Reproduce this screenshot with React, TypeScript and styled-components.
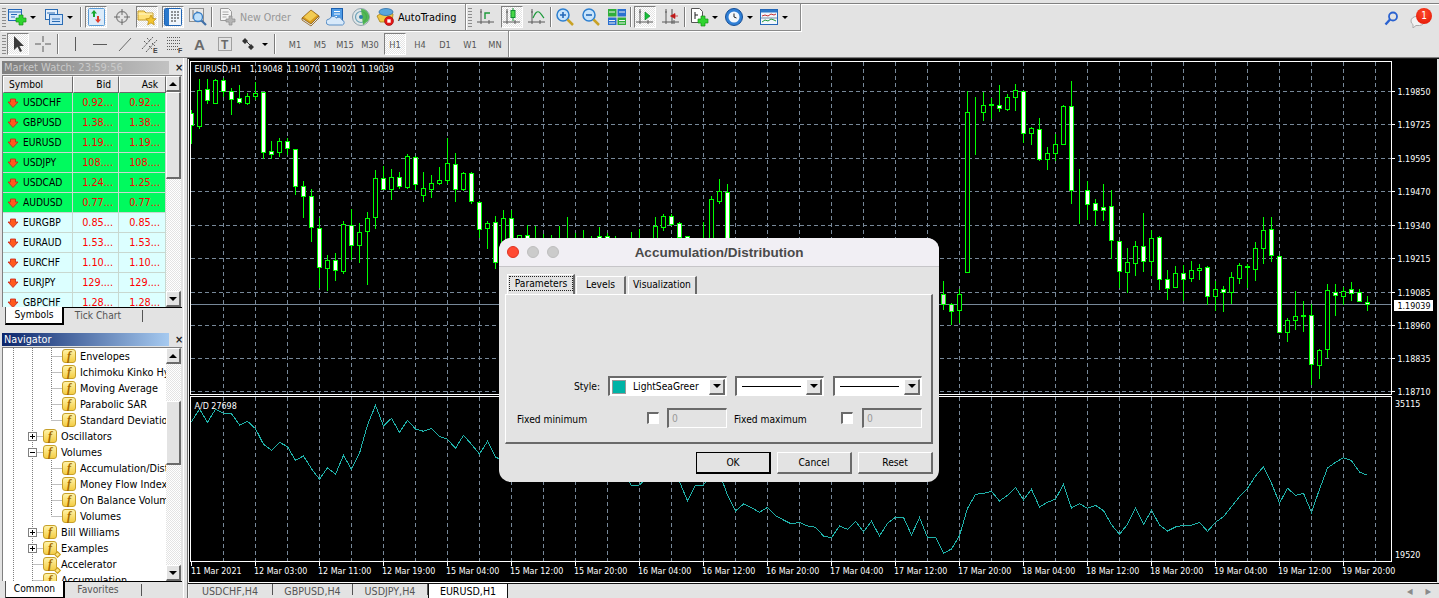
import React from "react";
import styled, { createGlobalStyle, css } from "styled-components";

const GlobalStyle = createGlobalStyle`
    html, body {
        margin: 0;
        padding: 0;
        overflow: hidden;
        background: #e3e3e3;
    }
    * {
        box-sizing: border-box;
    }
`;

const UI_FONT = `"DejaVu Sans Condensed", "DejaVu Sans", "Liberation Sans", sans-serif`;
const dither = css`
    background: repeating-conic-gradient(#ffffff 0 25%, #e3e3e3 0 50%) 0 0 / 2px 2px;
`;
const raised = css`
    background: #e3e3e3;
    border-style: solid;
    border-width: 1px 2px 2px 1px;
    border-color: #ffffff #6a6a6a #6a6a6a #ffffff;
`;
const sunken = css`
    border-style: solid;
    border-width: 2px 1px 1px 2px;
    border-color: #6a6a6a #ffffff #ffffff #6a6a6a;
`;

const Page = styled.div`
    position: relative;
    width: 1439px;
    height: 598px;
    overflow: hidden;
    background: #e3e3e3;
    font-family: ${UI_FONT};
    font-size: 11px;
    color: #000;
`;

/* ---------- toolbars ---------- */

const TopStrip = styled.div`
    height: 3px;
`;
const RowOne = styled.div`
    display: flex;
    align-items: stretch;
    height: 28px;
    border-top: 1px solid #808080;
    box-shadow: inset 0 1px 0 #ffffff;
`;
const RowTwo = styled.div`
    display: flex;
    align-items: stretch;
    height: 27px;
    border-bottom: 1px solid #808080;
`;
const ToolBar = styled.div<{ $width: number }>`
    display: flex;
    align-items: center;
    width: ${(p) => p.$width}px;
    padding-left: 2px;
    border-right: 1px solid #8a8a8a;
    border-bottom: 1px solid #8a8a8a;
    box-shadow: 1px 1px 0 #ffffff;
`;
const PeriodBar = styled(ToolBar)`
    border-bottom: none;
    box-shadow: 1px 0 0 #ffffff;
`;
const Grip = styled.span`
    width: 4px;
    height: 19px;
    flex: none;
    background: repeating-linear-gradient(#8c8c8c 0 1px, transparent 1px 3px);
`;
const Sep = styled.span<{ $before: number; $after: number }>`
    width: 1px;
    height: 20px;
    flex: none;
    margin: 0 ${(p) => p.$after}px 0 ${(p) => p.$before}px;
    background: #7c7c7c;
    box-shadow: 1px 0 0 #ffffff;
`;
const ToolGroup = styled.div<{ $gap: number; $before?: number }>`
    display: flex;
    align-items: center;
    gap: ${(p) => p.$gap}px;
    margin-left: ${(p) => p.$before ?? 0}px;
`;
const ToolButton = styled.span<{ $active?: boolean }>`
    display: flex;
    align-items: center;
    justify-content: center;
    width: 22px;
    height: 22px;
    flex: none;
    ${(p) =>
        p.$active &&
        css`
            ${dither};
            border: 1px solid;
            border-color: #7f7f7f #ffffff #ffffff #7f7f7f;
        `}
`;
const PlainTool = styled.span`
    display: flex;
    align-items: center;
    gap: 3px;
    height: 22px;
    flex: none;
`;
const ToolLabel = styled.span<{ $off?: boolean }>`
    font-size: ${(p) => (p.$off ? "10.6px" : "10.9px")};
    white-space: nowrap;
    color: ${(p) => (p.$off ? "#969696" : "#000")};
`;
const Caret = styled.span`
    width: 0;
    height: 0;
    border-left: 3px solid transparent;
    border-right: 3px solid transparent;
    border-top: 3px solid #000;
`;
const PeriodButton = styled(ToolButton)`
    font-size: 9.2px;
    color: #555;
`;
const RightTools = styled.div`
    display: flex;
    align-items: center;
    gap: 8px;
    margin-left: auto;
    padding-right: 7px;
`;
const Bubble = styled.span`
    position: relative;
    width: 24px;
    height: 20px;
`;
const Badge = styled.span`
    position: absolute;
    top: 0;
    right: 0;
    width: 16px;
    height: 16px;
    border-radius: 50%;
    background: radial-gradient(circle at 50% 35%, #ff4a2a, #e01000);
    color: #fff;
    font-size: 10px;
    line-height: 16px;
    text-align: center;
`;

/* ---------- icons ---------- */

const IconSvg = styled.svg`
    display: block;
    flex: none;
    width: 20px;
    height: 20px;
`;

const GreenPlus = ({ x, y }: { x: number; y: number }) => (
    <path
        transform={`translate(${x} ${y})`}
        d="M3 0h4v3h3v4H7v3H3V7H0V3h3z"
        fill="#2fd42f"
        stroke="#148f14"
        strokeWidth=".7"
    />
);

const Axes = ({ color = "#5a5a5a" }: { color?: string }) => (
    <path d="M5 2v15M1 15h17M4 5h2M13 13v4" stroke={color} strokeWidth="1" fill="none" />
);

const iconSet: Record<string, React.ReactNode> = {
    newChart: (
        <>
            <rect x="1.5" y="2.5" width="13" height="11" fill="#dcebfb" stroke="#2468b8" />
            <path d="M1.5 5h13M4 7.5h6M4 10h4" stroke="#2468b8" />
            <GreenPlus x={9} y={8} />
        </>
    ),
    profiles: (
        <>
            <rect x="1.5" y="2.5" width="12" height="10" fill="#e6f0fb" stroke="#2a6cb4" />
            <rect x="5.5" y="7.5" width="13" height="10" fill="#cfe2f8" stroke="#2a6cb4" />
            <path d="M3 6h8M8 12h8M8 14.5h8" stroke="#2a6cb4" />
        </>
    ),
    watch: (
        <>
            <rect x="2.5" y="1.5" width="16" height="17" rx="1" fill="#dcecfa" stroke="#5a9bd6" />
            <path d="M8 3l3 3.5H9V10H7V6.5H5z" fill="#19a832" />
            <path d="M11 9h2v3.5h2L12 16l-3-3.5h2z" fill="#e03a2a" />
        </>
    ),
    data: (
        <>
            <circle cx="10" cy="10" r="5.5" fill="none" stroke="#8a8a8a" strokeWidth="1.3" />
            <path d="M10 2v6M10 12v6M2 10h6M12 10h6" stroke="#6a6a6a" />
        </>
    ),
    navigator: (
        <>
            <path d="M1 4h6l2 2h7v7H1z" fill="#ffe27a" stroke="#c39a28" />
            <path d="M1.5 7h14" stroke="#fff6c8" />
            <path d="M14 8l1.6 3.4 3.6.4-2.7 2.4.8 3.6-3.3-1.9-3.3 1.9.8-3.6-2.7-2.4 3.6-.4z" fill="#f3c52e" stroke="#b98a10" strokeWidth=".7" />
        </>
    ),
    terminal: (
        <>
            <rect x="1.5" y="1.5" width="17" height="17" rx="1" fill="#eef5fc" stroke="#1f63b3" />
            <rect x="2" y="2" width="4" height="16" fill="#2a78cc" />
            <path d="M8 5h8M8 8h8M8 11h8M8 14h6" stroke="#2c2c2c" strokeDasharray="2 1" />
        </>
    ),
    tester: (
        <>
            <rect x="1.5" y="1.5" width="14" height="13" fill="#e8e8e8" stroke="#8f8f8f" />
            <path d="M5 3v9M9 4v9" stroke="#777" />
            <circle cx="10" cy="10" r="4.5" fill="#bfe0fb" stroke="#3a7fc6" strokeWidth="1.3" />
            <path d="M13.5 13.5l4.5 4.5" stroke="#3f6fa8" strokeWidth="2.2" />
        </>
    ),
    newOrder: (
        <>
            <path d="M3.5 1.5h8l3 3v9h-11z" fill="#f4f4f4" stroke="#9a9a9a" />
            <path d="M5.5 5h6M5.5 7.5h6M5.5 10h4" stroke="#a8a8a8" />
            <path d="M12 9h3v3h3v3h-3v3h-3v-3H9v-3h3z" fill="#b5b5b5" stroke="#8c8c8c" strokeWidth=".7" />
        </>
    ),
    editor: (
        <>
            <path d="M1 11l9-8 8 6-8 8z" fill="#d69a1e" stroke="#8a5c10" strokeWidth=".8" />
            <path d="M3 10l7-6.5 6 4.8-7 6z" fill="#f2cb52" />
            <path d="M1 11v2l9 6 8-8V9" fill="none" stroke="#8a5c10" strokeWidth=".8" />
        </>
    ),
    cloud: (
        <>
            <rect x="5.5" y="1.5" width="11" height="12" fill="#4e9be6" stroke="#1c5fae" />
            <path d="M8 4.5h6M8 7h6M8 9.5h3" stroke="#ffffff" />
            <path d="M3 18a3 3 0 0 1 .5-6 4 4 0 0 1 7-1 3.5 3.5 0 0 1 5.5 2 2.6 2.6 0 0 1 .5 5z" fill="#d7e9fa" stroke="#5a8fc6" />
        </>
    ),
    signals: (
        <>
            <circle cx="10" cy="10" r="8.5" fill="#dfe6e8" stroke="#8fa3ad" />
            <circle cx="10" cy="10" r="5.5" fill="none" stroke="#6ba1b8" strokeWidth="1.2" />
            <path d="M10 2a8 8 0 0 1 7 12l-5 4z" fill="#3cae3c" opacity=".85" />
            <circle cx="10" cy="10" r="2" fill="#2a7fa8" />
        </>
    ),
    autoTrading: (
        <>
            <path d="M2 9l9-6 7 4-1 8H5z" fill="#f0c845" stroke="#a67f14" strokeWidth=".8" />
            <ellipse cx="11" cy="5" rx="7" ry="3.5" fill="#58a6dc" stroke="#2f6fa8" strokeWidth=".8" />
            <circle cx="14" cy="14" r="4.5" fill="#e41616" stroke="#8c0a0a" strokeWidth=".6" />
            <rect x="12.3" y="12.3" width="3.4" height="3.4" fill="#ffffff" />
        </>
    ),
    bars: (
        <>
            <Axes />
            <path d="M9 12V6h5" fill="none" stroke="#1c9a3a" strokeWidth="1.4" />
        </>
    ),
    candles: (
        <>
            <Axes />
            <path d="M11 1v13" stroke="#109030" />
            <rect x="9" y="3.5" width="4" height="7" fill="#46d846" stroke="#109030" />
        </>
    ),
    line: (
        <>
            <Axes />
            <path d="M6 11c2-5 4-7 6-6s3 4 5 6" fill="none" stroke="#1c9a3a" strokeWidth="1.2" />
        </>
    ),
    zoomIn: (
        <>
            <circle cx="8" cy="8" r="6" fill="#c8e4fb" stroke="#2c7fd0" strokeWidth="1.5" />
            <path d="M5 8h6M8 5v6" stroke="#2468b8" strokeWidth="1.6" />
            <path d="M12.5 12.5l5.5 5.5" stroke="#c9a226" strokeWidth="2.5" />
        </>
    ),
    zoomOut: (
        <>
            <circle cx="8" cy="8" r="6" fill="#c8e4fb" stroke="#2c7fd0" strokeWidth="1.5" />
            <path d="M5 8h6" stroke="#2468b8" strokeWidth="1.6" />
            <path d="M12.5 12.5l5.5 5.5" stroke="#c9a226" strokeWidth="2.5" />
        </>
    ),
    tile: (
        <>
            <rect x="1" y="2" width="8.5" height="7.5" fill="#2fae3a" />
            <rect x="10.5" y="2" width="8.5" height="7.5" fill="#2a6fd0" />
            <rect x="1" y="10.5" width="8.5" height="7.5" fill="#2a6fd0" />
            <rect x="10.5" y="10.5" width="8.5" height="7.5" fill="#2fae3a" />
            <path d="M2 5h6M12 5h6M2 13.5h6M12 13.5h6M2 16h6M12 16h6" stroke="#f2f2f2" />
        </>
    ),
    autoScroll: (
        <>
            <Axes />
            <path d="M10 5l5 4-5 4z" fill="#16c13a" stroke="#0a8a24" strokeWidth=".7" />
        </>
    ),
    shift: (
        <>
            <Axes />
            <path d="M11 2v15" stroke="#4d4d4d" />
            <path d="M17 9h-3V6.5L9.5 9l4.5 2.5V9" fill="#c01818" stroke="#c01818" strokeWidth=".7" />
        </>
    ),
    indicators: (
        <>
            <path d="M2.5 1.5h8l3 3v11h-11z" fill="#ffffff" stroke="#555" />
            <path d="M6 5v7M6 8h3" stroke="#222" />
            <GreenPlus x={9} y={9} />
        </>
    ),
    clock: (
        <>
            <circle cx="10" cy="10" r="8.5" fill="#2f7fd6" stroke="#174f96" />
            <circle cx="10" cy="10" r="5.5" fill="#f4f8fc" />
            <path d="M10 6.5V10l2.5 1" fill="none" stroke="#222" />
        </>
    ),
    template: (
        <>
            <rect x="1.5" y="2.5" width="17" height="15" fill="#f2f7fc" stroke="#2468b8" />
            <rect x="2" y="3" width="16" height="2.5" fill="#2c78c8" />
            <path d="M3 9l3-1 3 1 3-2 3 1 2-1" fill="none" stroke="#c43030" />
            <path d="M2 11h16" stroke="#7a8fa5" />
            <path d="M3 15l3-2 3 1 3-2 3 1 2 1" fill="none" stroke="#1e9a3a" />
        </>
    ),
    cursor: <path d="M6 2v14l3.5-3.2 2.5 5.2 2-1-2.5-5h4.5z" fill="#3a3a3a" />,
    cross: <path d="M10 2v6M10 12v6M2 10h6M12 10h6" stroke="#5a5a5a" />,
    vLine: <path d="M10.5 3v14" stroke="#5a5a5a" />,
    hLine: <path d="M3 10.5h14" stroke="#5a5a5a" />,
    trend: <path d="M4 17L16 4" stroke="#6a6a6a" />,
    channel: (
        <>
            <path d="M2 15L13 3M6 18L17 6M4 7l3 3M7 4l3 3M9 12l3 3M12 9l3 3" stroke="#5a5a5a" strokeDasharray="2 1" />
            <text x="13" y="19" fontSize="7" fontWeight="700" fontFamily="Liberation Sans" fill="#444">E</text>
        </>
    ),
    fibo: (
        <>
            <path d="M2 3.5h14M2 6.5h14M2 9.5h14M2 12.5h11M2 15.5h11" stroke="#5a5a5a" strokeDasharray="1 1" />
            <text x="13" y="19" fontSize="7" fontWeight="700" fontFamily="Liberation Sans" fill="#444">F</text>
        </>
    ),
    textA: <text x="4" y="16" fontSize="15" fontWeight="700" fontFamily="Liberation Sans" fill="#6a6a6a">A</text>,
    textT: (
        <>
            <rect x="3.5" y="3.5" width="13" height="13" fill="none" stroke="#5a5a5a" strokeDasharray="1 1" />
            <text x="6" y="15" fontSize="12" fontWeight="700" fontFamily="Liberation Sans" fill="#6a6a6a">T</text>
        </>
    ),
    arrows: (
        <>
            <path d="M3 7l3-3 3 3-3 3zM12 10l3 3-3 3-3-3z" fill="#333" />
            <path d="M8 8l3 3" stroke="#333" />
        </>
    ),
    search: (
        <>
            <circle cx="13" cy="8.5" r="4" fill="none" stroke="#2a62d0" strokeWidth="1.8" />
            <path d="M10 11.5L5.5 16.5" stroke="#2a62d0" strokeWidth="2.4" />
        </>
    ),
    chat: (
        <path d="M3 13a5.5 4.5 0 0 1 5.5-4.5h2a5.5 4.5 0 0 1 1 9H8l-3 2.5v-3.5a4 4 0 0 1-2-3.5z" fill="#f2f2f2" stroke="#aaaaaa" />
    ),
};

const Icon = ({ name }: { name: string }) => <IconSvg viewBox="0 0 20 20">{iconSet[name]}</IconSvg>;

/* ---------- left panels ---------- */

const Main = styled.div`
    display: flex;
    height: 540px;
`;
const LeftPane = styled.div`
    display: flex;
    flex-direction: column;
    width: 187px;
    flex: none;
    box-shadow: inset -3px 0 0 #e3e3e3, inset -4px 0 0 #ffffff;
`;
const MarketPanel = styled.section`
    display: flex;
    flex-direction: column;
    height: 271px;
    padding: 2px 0 0 2px;
`;
const NavigatorPanel = styled.section`
    display: flex;
    flex-direction: column;
    flex: 1;
    min-height: 0;
    padding: 3px 0 0 2px;
`;
const PanelHead = styled.div`
    display: flex;
    align-items: center;
    height: 14px;
    flex: none;
`;
const PanelTitle = styled.div<{ $active?: boolean }>`
    width: 167px;
    height: 13px;
    padding-left: 2px;
    line-height: 13px;
    font-size: ${(p) => (p.$active ? "10.8px" : "11px")};
    color: ${(p) => (p.$active ? "#ffffff" : "#c9c9c9")};
    background: ${(p) =>
        p.$active ? "linear-gradient(90deg, #0a246a, #a6caf0)" : "linear-gradient(90deg, #7f7f7f, #c2c2c2)"};
`;
const CloseMark = styled.span`
    margin-left: 6px;
    font-size: 11px;
    font-weight: 700;
    color: #222;
    line-height: 13px;
`;
const ListFrame = styled.div<{ $height: number }>`
    position: relative;
    display: flex;
    width: 180px;
    height: ${(p) => p.$height}px;
    flex: none;
    margin-top: 1px;
    overflow: hidden;
    border-top: 1px solid #808080;
    border-left: 1px solid #808080;
`;
const ListBody = styled.div`
    width: 163px;
    flex: none;
    overflow: hidden;
    background: #fff;
`;
const HeaderRow = styled.div`
    display: grid;
    grid-template-columns: 70px 46px 47px;
    height: 17px;
`;
const HeaderCell = styled.div<{ $right?: boolean }>`
    ${raised};
    border-width: 1px;
    padding: 0 7px 0 5px;
    line-height: 15px;
    font-size: 10.2px;
    text-align: ${(p) => (p.$right ? "right" : "left")};
`;
const QuoteRow = styled.div<{ $fresh: boolean }>`
    display: grid;
    grid-template-columns: 70px 46px 47px;
    height: 20px;
    background: ${(p) => (p.$fresh ? "#00fa5e" : "#dcffff")};
`;
const QuoteCell = styled.div`
    display: flex;
    align-items: center;
    border-right: 1px solid #c8d8d0;
    border-bottom: 1px solid #c8d8d0;
`;
const SymbolCell = styled(QuoteCell)`
    gap: 4px;
    padding-left: 4px;
    font-size: 10.2px;
`;
const PriceCell = styled(QuoteCell)`
    justify-content: flex-end;
    padding-right: 5px;
    font-size: 10.8px;
    color: #ff0000;
`;
const DownArrow = styled.svg`
    width: 12px;
    height: 12px;
    flex: none;
`;
const ScrollTrack = styled.div`
    ${dither};
    display: flex;
    flex-direction: column;
    width: 15px;
    flex: none;
`;
const ScrollThumb = styled.div<{ $before: number; $height: number }>`
    ${raised};
    width: 15px;
    height: ${(p) => p.$height}px;
    margin-top: ${(p) => p.$before}px;
    flex: none;
`;
const ScrollButton = styled.div<{ $bottom?: boolean }>`
    ${raised};
    display: flex;
    align-items: center;
    justify-content: center;
    width: 15px;
    height: 16px;
    flex: none;
    margin-top: ${(p) => (p.$bottom ? "auto" : "0")};
    &::after {
        content: "";
        border-left: 4px solid transparent;
        border-right: 4px solid transparent;
        ${(p) => (p.$bottom ? "border-top: 4px solid #000;" : "border-bottom: 4px solid #000;")}
    }
`;
const PanelTabs = styled.div`
    display: flex;
    align-items: stretch;
    height: 18px;
    margin-left: 3px;
    width: 177px;
    border-top: 1px solid #000;
`;
const PanelTab = styled.div<{ $active?: boolean; $width: number }>`
    width: ${(p) => p.$width}px;
    text-align: center;
    line-height: 16px;
    font-size: 10.2px;
    color: ${(p) => (p.$active ? "#000" : "#555")};
    ${(p) =>
        p.$active &&
        css`
            background: #fff;
            border-left: 1px solid #555;
            border-right: 2px solid #000;
            border-bottom: 2px solid #000;
            margin-top: -1px;
        `}
`;
const TabBar = styled.span`
    width: 1px;
    height: 12px;
    margin: 2px 0 0 10px;
    background: #555;
`;

const TreeRowWrap = styled.div`
    display: flex;
    align-items: center;
    height: 16px;
    white-space: nowrap;
    font-size: 10.8px;
`;
const TreeLines = styled.svg`
    display: block;
    flex: none;
    height: 16px;
`;
const FuncIcon = styled.span`
    position: relative;
    display: inline-block;
    width: 14px;
    height: 14px;
    flex: none;
    margin-right: 4px;
    border: 1px solid #c6a02a;
    border-radius: 3px;
    background: linear-gradient(#fff3a8, #f4cd45);
    font: italic 700 12px/12px "Liberation Serif", serif;
    color: #a56a00;
    text-align: center;
`;
const Diamond = styled.span`
    position: absolute;
    right: -4px;
    bottom: -3px;
    width: 5px;
    height: 5px;
    transform: rotate(45deg);
    background: #ffe680;
    border: 1px solid #c69a1a;
`;

/* ---------- chart ---------- */

const ChartPane = styled.main`
    display: flex;
    flex-direction: column;
    flex: 1;
    min-width: 0;
    padding-right: 3px;
    border-top: 1px solid #1a1a1a;
    border-left: 1px solid #6f6f6f;
    box-shadow: inset 1px 0 0 #f2f2f2;
`;
const ChartSvg = styled.svg`
    display: block;
    flex: none;
    width: 1248px;
    height: 523px;
    margin-left: 1px;
    background: #000;
    font-family: ${UI_FONT};
    font-size: 8.9px;
`;
const ChartEdge = styled.div`
    height: 1px;
    margin-left: 1px;
    background: #fff;
`;
const WindowTabs = styled.div`
    display: flex;
    align-items: stretch;
    height: 15px;
    margin-right: -3px;
    border-top: 1px solid #111;
    font-size: 10.6px;
`;
const WindowTab = styled.div<{ $width: number; $active?: boolean }>`
    width: ${(p) => p.$width}px;
    line-height: 15px;
    text-align: center;
    color: ${(p) => (p.$active ? "#000" : "#555")};
    ${(p) =>
        p.$active
            ? css`
                  background: #fff;
                  border-left: 1px solid #111;
                  border-right: 1px solid #111;
              `
            : css`
                  border-right: 1px solid #555;
                  margin-bottom: 3px;
              `}
`;
const TabArrows = styled.div`
    display: flex;
    align-items: center;
    gap: 13px;
    margin-left: auto;
    padding-right: 8px;
    color: #8a8a8a;
    font-size: 8px;
`;

/* ---------- dialog ---------- */

const Dialog = styled.div`
    position: absolute;
    left: 499px;
    top: 238px;
    display: flex;
    flex-direction: column;
    width: 440px;
    height: 244px;
    overflow: hidden;
    border-radius: 12px;
    background: #e3e3e3;
`;
const DialogTitle = styled.div`
    position: relative;
    display: flex;
    align-items: center;
    justify-content: center;
    height: 29px;
    flex: none;
    background: #f1eff4;
    border-bottom: 1px solid #c6c5c8;
    font-family: "Liberation Sans", Arial, sans-serif;
    font-size: 13.5px;
    font-weight: 700;
    color: #4a4a4a;
`;
const Lights = styled.div`
    position: absolute;
    left: 8px;
    top: 8px;
    display: flex;
    gap: 8px;
`;
const Light = styled.span<{ $red?: boolean }>`
    width: 12px;
    height: 12px;
    border-radius: 50%;
    background: ${(p) => (p.$red ? "#ff4a33" : "#cbcbcb")};
    border: 1px solid ${(p) => (p.$red ? "#dd3322" : "#bdbdbd")};
`;
const DialogBody = styled.div`
    display: flex;
    flex-direction: column;
    flex: 1;
    padding: 7px 6px 8px;
    font-size: 10.2px;
`;
const DialogTabs = styled.div`
    display: flex;
    align-items: flex-end;
    height: 20px;
    padding-left: 2px;
`;
const DialogTab = styled.div<{ $width: number; $active?: boolean }>`
    position: relative;
    width: ${(p) => p.$width}px;
    height: ${(p) => (p.$active ? "20px" : "18px")};
    margin-right: ${(p) => (p.$active ? "1px" : "2px")};
    border-top: 1px solid #fff;
    border-left: 1px solid #fff;
    border-right: 2px solid #6a6a6a;
    text-align: center;
    line-height: 16px;
`;
const FocusText = styled.span`
    display: block;
    margin: 1px 0 0 1px;
    border: 1px dotted #222;
    line-height: 13px;
`;
const TabSheet = styled.div`
    display: flex;
    flex-direction: column;
    justify-content: flex-end;
    flex: 1;
    min-height: 0;
    padding: 0 9px 14px 11px;
    border-style: solid;
    border-width: 1px 2px 2px 1px;
    border-color: #fff #6a6a6a #6a6a6a #fff;
`;
const StyleRow = styled.div`
    display: flex;
    align-items: center;
    justify-content: flex-end;
    height: 20px;
`;
const StyleLabel = styled.span`
    margin-right: 8px;
`;
const Combo = styled.div<{ $width: number; $after?: number }>`
    ${sunken};
    display: flex;
    align-items: center;
    width: ${(p) => p.$width}px;
    height: 20px;
    margin-right: ${(p) => p.$after ?? 0}px;
    padding: 0 1px 0 2px;
    background: #fff;
    overflow: hidden;
    white-space: nowrap;
`;
const Swatch = styled.span`
    width: 14px;
    height: 14px;
    flex: none;
    margin-right: 7px;
    border: 1px solid #999;
    background: #00b3a6;
`;
const ComboText = styled.span`
    flex: 1;
    min-width: 0;
    overflow: hidden;
`;
const ComboLine = styled.span`
    flex: 1;
    height: 1px;
    margin: 0 5px 0 3px;
    background: #000;
`;
const ComboButton = styled.span`
    ${raised};
    display: flex;
    align-items: center;
    justify-content: center;
    width: 16px;
    height: 16px;
    flex: none;
    &::after {
        content: "";
        border-left: 4px solid transparent;
        border-right: 4px solid transparent;
        border-top: 4px solid #000;
    }
`;
const LimitRow = styled.div`
    display: grid;
    grid-template-columns: 130px 12px 68px 114px 12px 69px;
    align-items: center;
    height: 20px;
    margin-top: 12px;
`;
const CheckBox = styled.span`
    ${sunken};
    width: 12px;
    height: 12px;
    background: #fff;
`;
const LimitInput = styled.span<{ $indent: number }>`
    ${sunken};
    height: 20px;
    margin-left: ${(p) => p.$indent}px;
    padding-left: 3px;
    line-height: 17px;
    color: #9a9a9a;
`;
const LimitLabel = styled.span<{ $indent?: number }>`
    padding-top: 3px;
    margin-left: ${(p) => p.$indent ?? 0}px;
`;
const DialogActions = styled.div`
    display: flex;
    justify-content: flex-end;
    gap: 6px;
    margin-top: 8px;
`;
const PushButton = styled.button<{ $primary?: boolean }>`
    ${raised};
    width: 75px;
    height: 22px;
    padding: 0;
    font-family: ${UI_FONT};
    font-size: 10.2px;
    color: #000;
    ${(p) =>
        p.$primary &&
        css`
            border-color: #000;
        `}
`;

/* ---------- chart data (pixel rows read off the picture) ---------- */

type Row = [number, number, number, number, number];
const toBars = (base: number, rows: Row[]) =>
    rows.map(([high, top, bottom, low, kind]) => ({
        high: base + high / 3,
        top: base + top / 3,
        bottom: base + bottom / 3,
        low: base + low / 3,
        kind,
    }));

const leftBars: Row[] = [
    [165, 175, 210, 265, 1], [72, 106, 212, 218, 0], [72, 103, 136, 143, 1], [72, 76, 143, 143, 0],
    [70, 76, 109, 122, 1], [100, 109, 133, 177, 1], [91, 130, 142, 143, 1], [113, 124, 143, 148, 0],
    [82, 115, 124, 133, 0], [112, 112, 290, 310, 1], [259, 287, 296, 309, 1], [250, 259, 292, 302, 0],
    [250, 259, 280, 296, 1], [283, 283, 394, 418, 1], [379, 394, 424, 485, 1], [403, 424, 517, 557, 1],
    [488, 520, 637, 695, 1], [600, 616, 640, 704, 0], [595, 616, 646, 675, 1], [498, 508, 647, 653, 0],
    [463, 511, 571, 613, 1], [505, 532, 571, 620, 0], [472, 490, 529, 688, 0], [346, 370, 487, 518, 0],
    [332, 370, 403, 403, 1], [343, 367, 403, 431, 0], [350, 367, 394, 400, 1], [298, 304, 397, 400, 0],
    [304, 307, 388, 403, 1], [352, 400, 421, 437, 0], [361, 385, 403, 425, 0], [337, 376, 385, 388, 0],
    [250, 325, 376, 385, 0], [295, 328, 403, 437, 1], [352, 355, 403, 406, 0], [352, 355, 439, 445, 1],
    [439, 442, 523, 547, 1], [499, 505, 520, 580, 0], [484, 502, 622, 640, 1],
];
const hidden: Row = [300, 300, 300, 300, 0];
const middleBars: Row[] = [
    [180, 205, 300, 300, 0], [180, 205, 300, 300, 1], [256, 256, 300, 300, 0], [226, 256, 300, 300, 1],
    [228, 300, 300, 300, 0], [252, 300, 300, 300, 0], [255, 300, 300, 300, 0], [228, 300, 300, 300, 0],
    [201, 300, 300, 300, 0], [250, 300, 300, 300, 0], [240, 300, 300, 300, 0], [258, 300, 300, 300, 0],
    [232, 259, 300, 300, 1], [250, 259, 300, 300, 1], [258, 300, 300, 300, 0], hidden,
    [246, 300, 300, 300, 0], [238, 300, 300, 300, 0], hidden, [201, 229, 300, 300, 0],
    [192, 198, 230, 240, 0], [192, 198, 221, 226, 1], [216, 220, 261, 300, 1], [259, 259, 300, 300, 1],
    hidden, [216, 300, 300, 300, 0], [138, 148, 300, 300, 0], [87, 124, 152, 158, 0],
    [102, 127, 300, 300, 1],
];
const middleFilled: Row[] = Array.from({ length: 55 }, (_, i) => middleBars[i] ?? hidden);
const rightBars: Row[] = [
    [678, 718, 748, 762, 2], [745, 748, 769, 807, 2], [703, 718, 766, 800, 0], [109, 172, 652, 652, 0],
    [127, 172, 172, 297, 0], [112, 151, 172, 195, 0], [130, 148, 151, 190, 0], [91, 151, 160, 167, 1],
    [118, 127, 163, 166, 0], [88, 106, 127, 165, 0], [109, 109, 235, 260, 1], [217, 220, 235, 266, 0],
    [190, 223, 313, 315, 1], [277, 295, 313, 343, 0], [236, 268, 295, 316, 0], [151, 154, 268, 268, 0],
    [79, 154, 406, 444, 1], [343, 406, 406, 503, 0], [379, 406, 448, 493, 1], [433, 445, 466, 511, 1],
    [388, 457, 466, 495, 1], [406, 454, 556, 610, 1], [559, 559, 649, 697, 1], [580, 622, 652, 712, 0],
    [559, 574, 625, 659, 0], [475, 574, 619, 649, 1], [526, 550, 619, 659, 0], [544, 547, 673, 703, 1],
    [646, 673, 700, 731, 1], [634, 655, 697, 697, 0], [631, 655, 673, 736, 1], [619, 646, 670, 679, 0],
    [628, 640, 646, 671, 0], [634, 637, 724, 748, 1], [679, 703, 724, 765, 0], [694, 703, 711, 767, 1],
    [652, 667, 712, 744, 0], [625, 631, 670, 684, 0], [628, 634, 637, 695, 0], [562, 580, 643, 675, 0],
    [487, 526, 580, 624, 0], [487, 523, 601, 617, 1], [601, 604, 832, 832, 1], [790, 796, 832, 857, 0],
    [709, 784, 796, 821, 0], [739, 781, 784, 828, 0], [748, 781, 928, 986, 1], [883, 886, 931, 968, 0],
    [688, 706, 883, 905, 0], [688, 712, 721, 780, 1], [697, 709, 724, 748, 0], [682, 703, 715, 736, 1],
    [703, 712, 739, 739, 1], [724, 742, 748, 765, 1],
];
const bars = [...toBars(55, leftBars), ...toBars(150, middleFilled), ...toBars(55, rightBars)];

const adLeft = [
    95, 57, 97, 58, 70, 71, 105, 94, 116, 163, 181, 157, 170, 211, 198, 236, 268, 233, 253, 196, 238, 190, 105,
    46, 108, 85, 127, 91, 117, 124, 115, 139, 148, 175, 136, 163, 192, 154, 202,
].map((z) => 390 + z / 3);
const adMiddle = [
    -60, -60, -60, -60, -60, -60, -60, -60, -60, -60, -60, -60, -60, -60, -60, -30, 18, 15, -10, -60, -60, -60, 5,
    62, 15, 15, -20, -20, 45, 93, 72, 83, 97, 82, 107, 120, 132, 127, 138, 142, 168, 173, 138, 148, 124, 155, 124,
    168, 130, 112, 112, 165, 113, 172, 172,
].map((z) => 480 + z / 3);
const adRight = [
    490, 477, 437, 355, 313, 310, 304, 333, 316, 292, 330, 298, 351, 337, 327, 283, 354, 341, 355, 346, 362, 404,
    433, 403, 355, 403, 361, 405, 423, 411, 406, 406, 397, 424, 397, 380, 350, 320, 295, 258, 230, 280, 339, 295,
    316, 310, 367, 298, 234, 217, 203, 212, 246, 256,
].map((z) => 390 + z / 3);
const adLine = [...adLeft, ...adMiddle, ...adRight]
    .map((y, i) => `${(191.5 + 8 * i).toFixed(1)},${y.toFixed(1)}`)
    .join(" ");

const priceLevels: [string, number][] = [
    ["1.19850", 91.5], ["1.19725", 124.5], ["1.19595", 158.5], ["1.19470", 191.5], ["1.19340", 225.5],
    ["1.19215", 258.5], ["1.19085", 292.5], ["1.18960", 325.5], ["1.18835", 358.5], ["1.18710", 391.5],
];
const timeLabels = [
    "11 Mar 2021", "12 Mar 03:00", "12 Mar 11:00", "12 Mar 19:00", "15 Mar 04:00", "15 Mar 12:00", "15 Mar 20:00",
    "16 Mar 04:00", "16 Mar 12:00", "16 Mar 20:00", "17 Mar 04:00", "17 Mar 12:00", "17 Mar 20:00", "18 Mar 04:00",
    "18 Mar 12:00", "18 Mar 20:00", "19 Mar 04:00", "19 Mar 12:00", "19 Mar 20:00",
];
const gridXs = Array.from({ length: 37 }, (_, i) => 223.5 + 32 * i);

const Chart = () => (
    <ChartSvg viewBox="189 59 1248 523" shapeRendering="crispEdges">
        <defs>
            <clipPath id="mainWindow">
                <rect x="191" y="62" width="1200" height="332" />
            </clipPath>
        </defs>
        <g stroke="#778899" strokeDasharray="4 3" strokeWidth="1">
            {gridXs.map((x) => (
                <line key={x} x1={x} x2={x} y1="62" y2="394" />
            ))}
            {gridXs.map((x) => (
                <line key={x} x1={x} x2={x} y1="397" y2="561" />
            ))}
            {priceLevels.map(([label, y]) => (
                <line key={label} x1="191" x2="1391" y1={y} y2={y} />
            ))}
        </g>
        <line x1="191" x2="1391" y1="304.5" y2="304.5" stroke="#778899" />
        <g clipPath="url(#mainWindow)" stroke="#00ff00">
            {bars.map((b, i) => {
                const x = 191.5 + 8 * i;
                const top = Math.round(b.top) + 0.5;
                const bottom = Math.round(b.bottom) + 0.5;
                const fill = b.kind === 1 ? "#ffffff" : b.kind === 2 ? "#dcdcdc" : "#000000";
                return (
                    <g key={i}>
                        <line x1={x} x2={x} y1={Math.round(b.high)} y2={Math.round(b.low) + 1} />
                        <rect x={x - 2} y={top} width="4" height={Math.max(bottom - top, 0)} fill={fill} />
                    </g>
                );
            })}
        </g>
        <polyline points={adLine} fill="none" stroke="#20b2aa" />
        <rect x="190.5" y="61.5" width="1201" height="333" fill="none" stroke="#fff" />
        <rect x="190.5" y="396.5" width="1201" height="165" fill="none" stroke="#fff" />
        <g stroke="#fff">
            {priceLevels.map(([label, y]) => (
                <line key={label} x1="1392" x2="1395" y1={y} y2={y} />
            ))}
            {timeLabels.map((t, i) => (
                <line key={t} x1={191.5 + 64 * i} x2={191.5 + 64 * i} y1="562" y2="566" />
            ))}
        </g>
        <g fill="#fff" stroke="none" shapeRendering="auto">
            <text x="194.5" y="72" wordSpacing="1.5">{"EURUSD,H1\u00a0 1.19048 1.19070 1.19021 1.19039"}</text>
            <text x="194.5" y="409">A/D 27698</text>
            {priceLevels.map(([label, y]) => (
                <text key={label} x="1397.5" y={y + 3.5}>{label}</text>
            ))}
            <text x="1395" y="406.5">35115</text>
            <text x="1395" y="557.5">19520</text>
            {timeLabels.map((t, i) => (
                <text key={t} x={191 + 64 * i - (i === 0 ? 0 : 1)} y="573.5">{t}</text>
            ))}
        </g>
        <rect x="1394" y="299.5" width="39" height="11" fill="#fff" />
        <text x="1397.5" y="308.5" fill="#000">1.19039</text>
    </ChartSvg>
);

/* ---------- left panel content ---------- */

const quotes: [string, string, string, boolean][] = [
    ["USDCHF", "0.92...", "0.92...", true],
    ["GBPUSD", "1.38...", "1.38...", true],
    ["EURUSD", "1.19...", "1.19...", true],
    ["USDJPY", "108....", "108....", true],
    ["USDCAD", "1.24...", "1.25...", true],
    ["AUDUSD", "0.77...", "0.77...", true],
    ["EURGBP", "0.85...", "0.85...", false],
    ["EURAUD", "1.53...", "1.53...", false],
    ["EURCHF", "1.10...", "1.10...", false],
    ["EURJPY", "129....", "129....", false],
    ["GBPCHF", "1.28...", "1.28...", false],
];

const QuoteArrow = () => (
    <DownArrow viewBox="0 0 12 12">
        <path d="M3.5 2h5v3H11L6 10.5 1 5h2.500z" fill="#ff5a1e" stroke="#c8241a" strokeWidth=".8" strokeLinejoin="round" />
    </DownArrow>
);

type TreeItem = {
    label: string;
    level: 1 | 2;
    last?: boolean;
    box?: "plus" | "minus";
    mark?: boolean;
};

const treeItems: TreeItem[] = [
    { label: "Envelopes", level: 2 },
    { label: "Ichimoku Kinko Hyo", level: 2 },
    { label: "Moving Average", level: 2 },
    { label: "Parabolic SAR", level: 2 },
    { label: "Standard Deviation", level: 2, last: true },
    { label: "Oscillators", level: 1, box: "plus" },
    { label: "Volumes", level: 1, box: "minus" },
    { label: "Accumulation/Distribution", level: 2 },
    { label: "Money Flow Index", level: 2 },
    { label: "On Balance Volume", level: 2 },
    { label: "Volumes", level: 2, last: true },
    { label: "Bill Williams", level: 1, box: "plus" },
    { label: "Examples", level: 1, box: "plus", mark: true },
    { label: "Accelerator", level: 1, mark: true },
    { label: "Accumulation", level: 1, mark: true },
];

const TreeRow = ({ item }: { item: TreeItem }) => {
    const width = item.level === 2 ? 59 : 40;
    return (
        <TreeRowWrap>
            <TreeLines width={width} viewBox={`0 0 ${width} 16`}>
                <g stroke="#808080" strokeDasharray="1 1" fill="none">
                    <path d="M10.5 0v16M29.5 0v16" />
                    {item.level === 2 && <path d={`M48.5 0V${item.last ? 8 : 16}M48.5 8.5H59`} />}
                    {item.level === 1 && <path d="M29.5 8.5H40" />}
                </g>
                {item.box && (
                    <g>
                        <rect x="25.5" y="4.5" width="8" height="8" fill="#fff" stroke="#808080" />
                        <path d={item.box === "plus" ? "M27 8.5h5M29.5 6v5" : "M27 8.5h5"} stroke="#000" />
                    </g>
                )}
            </TreeLines>
            <FuncIcon>
                f{item.mark && <Diamond />}
            </FuncIcon>
            {item.label}
        </TreeRowWrap>
    );
};

/* ---------- page ---------- */

const App = () => (
    <Page>
        <GlobalStyle />
        <TopStrip />
        <RowOne>
            <ToolBar $width={466}>
                <Grip />
                <ToolGroup $gap={8} $before={1}>
                    <PlainTool><Icon name="newChart" /><Caret /></PlainTool>
                    <PlainTool><Icon name="profiles" /><Caret /></PlainTool>
                </ToolGroup>
                <Sep $before={7} $after={4} />
                <ToolGroup $gap={3.5}>
                    <ToolButton $active><Icon name="watch" /></ToolButton>
                    <ToolButton><Icon name="data" /></ToolButton>
                    <ToolButton $active><Icon name="navigator" /></ToolButton>
                    <ToolButton $active><Icon name="terminal" /></ToolButton>
                    <ToolButton><Icon name="tester" /></ToolButton>
                </ToolGroup>
                <Sep $before={2} $after={5} />
                <PlainTool>
                    <Icon name="newOrder" />
                    <ToolLabel $off>New Order</ToolLabel>
                </PlainTool>
                <ToolGroup $gap={5} $before={10}>
                    <Icon name="editor" />
                    <Icon name="cloud" />
                    <Icon name="signals" />
                </ToolGroup>
                <ToolGroup $gap={0} $before={4}>
                    <PlainTool>
                        <Icon name="autoTrading" />
                        <ToolLabel>AutoTrading</ToolLabel>
                    </PlainTool>
                </ToolGroup>
            </ToolBar>
            <ToolBar $width={335}>
                <Grip />
                <ToolGroup $gap={3.5} $before={3}>
                    <ToolButton><Icon name="bars" /></ToolButton>
                    <ToolButton $active><Icon name="candles" /></ToolButton>
                    <ToolButton><Icon name="line" /></ToolButton>
                </ToolGroup>
                <Sep $before={2} $after={3} />
                <ToolGroup $gap={4}>
                    <ToolButton><Icon name="zoomIn" /></ToolButton>
                    <ToolButton><Icon name="zoomOut" /></ToolButton>
                    <ToolButton><Icon name="tile" /></ToolButton>
                </ToolGroup>
                <Sep $before={2} $after={3} />
                <ToolGroup $gap={4}>
                    <ToolButton $active><Icon name="autoScroll" /></ToolButton>
                    <ToolButton><Icon name="shift" /></ToolButton>
                </ToolGroup>
                <Sep $before={2} $after={4} />
                <ToolGroup $gap={6}>
                    <PlainTool><Icon name="indicators" /><Caret /></PlainTool>
                    <PlainTool><Icon name="clock" /><Caret /></PlainTool>
                    <PlainTool><Icon name="template" /><Caret /></PlainTool>
                </ToolGroup>
            </ToolBar>
            <RightTools>
                <Icon name="search" />
                <Bubble>
                    <Icon name="chat" />
                    <Badge>1</Badge>
                </Bubble>
            </RightTools>
        </RowOne>
        <RowTwo>
            <PeriodBar $width={509}>
                <Grip />
                <ToolGroup $gap={3} $before={1}>
                    <ToolButton $active><Icon name="cursor" /></ToolButton>
                    <ToolButton><Icon name="cross" /></ToolButton>
                </ToolGroup>
                <Sep $before={3} $after={6} />
                <ToolGroup $gap={3}>
                    <ToolButton><Icon name="vLine" /></ToolButton>
                    <ToolButton><Icon name="hLine" /></ToolButton>
                    <ToolButton><Icon name="trend" /></ToolButton>
                    <ToolButton><Icon name="channel" /></ToolButton>
                    <ToolButton><Icon name="fibo" /></ToolButton>
                    <ToolButton><Icon name="textA" /></ToolButton>
                    <ToolButton><Icon name="textT" /></ToolButton>
                </ToolGroup>
                <ToolGroup $gap={0} $before={3}>
                    <PlainTool><Icon name="arrows" /><Caret /></PlainTool>
                </ToolGroup>
                <Sep $before={6} $after={9} />
                <ToolGroup $gap={3}>
                    <PeriodButton>M1</PeriodButton>
                    <PeriodButton>M5</PeriodButton>
                    <PeriodButton>M15</PeriodButton>
                    <PeriodButton>M30</PeriodButton>
                    <PeriodButton $active>H1</PeriodButton>
                    <PeriodButton>H4</PeriodButton>
                    <PeriodButton>D1</PeriodButton>
                    <PeriodButton>W1</PeriodButton>
                    <PeriodButton>MN</PeriodButton>
                </ToolGroup>
            </PeriodBar>
        </RowTwo>
        <Main>
            <LeftPane>
                <MarketPanel>
                    <PanelHead>
                        <PanelTitle>Market Watch: 23:59:56</PanelTitle>
                        <CloseMark>×</CloseMark>
                    </PanelHead>
                    <ListFrame $height={232}>
                        <ListBody>
                            <HeaderRow>
                                <HeaderCell>Symbol</HeaderCell>
                                <HeaderCell $right>Bid</HeaderCell>
                                <HeaderCell $right>Ask</HeaderCell>
                            </HeaderRow>
                            {quotes.map(([symbol, bid, ask, fresh]) => (
                                <QuoteRow key={symbol} $fresh={fresh}>
                                    <SymbolCell><QuoteArrow />{symbol}</SymbolCell>
                                    <PriceCell>{bid}</PriceCell>
                                    <PriceCell>{ask}</PriceCell>
                                </QuoteRow>
                            ))}
                        </ListBody>
                        <ScrollTrack>
                            <ScrollButton />
                            <ScrollThumb $before={0} $height={87} />
                            <ScrollButton $bottom />
                        </ScrollTrack>
                    </ListFrame>
                    <PanelTabs>
                        <PanelTab $active $width={59}>Symbols</PanelTab>
                        <PanelTab $width={68}>Tick Chart</PanelTab>
                        <TabBar />
                    </PanelTabs>
                </MarketPanel>
                <NavigatorPanel>
                    <PanelHead>
                        <PanelTitle $active>Navigator</PanelTitle>
                        <CloseMark>×</CloseMark>
                    </PanelHead>
                    <ListFrame $height={234}>
                        <ListBody>
                            {treeItems.map((item, i) => (
                                <TreeRow key={i} item={item} />
                            ))}
                        </ListBody>
                        <ScrollTrack>
                            <ScrollButton />
                            <ScrollThumb $before={37} $height={64} />
                            <ScrollButton $bottom />
                        </ScrollTrack>
                    </ListFrame>
                    <PanelTabs>
                        <PanelTab $active $width={60}>Common</PanelTab>
                        <PanelTab $width={66}>Favorites</PanelTab>
                        <TabBar />
                    </PanelTabs>
                </NavigatorPanel>
            </LeftPane>
            <ChartPane>
                <Chart />
                <ChartEdge />
                <WindowTabs>
                    <WindowTab $width={85}>USDCHF,H4</WindowTab>
                    <WindowTab $width={80}>GBPUSD,H4</WindowTab>
                    <WindowTab $width={75}>USDJPY,H4</WindowTab>
                    <WindowTab $active $width={80}>EURUSD,H1</WindowTab>
                    <TabArrows>
                        <span>◀</span>
                        <span>▶</span>
                    </TabArrows>
                </WindowTabs>
            </ChartPane>
        </Main>
        <Dialog>
            <DialogTitle>
                <Lights>
                    <Light $red />
                    <Light />
                    <Light />
                </Lights>
                Accumulation/Distribution
            </DialogTitle>
            <DialogBody>
                <DialogTabs>
                    <DialogTab $active $width={68}><FocusText>Parameters</FocusText></DialogTab>
                    <DialogTab $width={50}>Levels</DialogTab>
                    <DialogTab $width={69}>Visualization</DialogTab>
                </DialogTabs>
                <TabSheet>
                    <StyleRow>
                        <StyleLabel>Style:</StyleLabel>
                        <Combo $width={119} $after={8}>
                            <Swatch />
                            <ComboText>LightSeaGreer</ComboText>
                            <ComboButton />
                        </Combo>
                        <Combo $width={89} $after={9}>
                            <ComboLine />
                            <ComboButton />
                        </Combo>
                        <Combo $width={89}>
                            <ComboLine />
                            <ComboButton />
                        </Combo>
                    </StyleRow>
                    <LimitRow>
                        <LimitLabel>Fixed minimum</LimitLabel>
                        <CheckBox />
                        <LimitInput $indent={8}>0</LimitInput>
                        <LimitLabel $indent={7}>Fixed maximum</LimitLabel>
                        <CheckBox />
                        <LimitInput $indent={9}>0</LimitInput>
                    </LimitRow>
                </TabSheet>
                <DialogActions>
                    <PushButton $primary>OK</PushButton>
                    <PushButton>Cancel</PushButton>
                    <PushButton>Reset</PushButton>
                </DialogActions>
            </DialogBody>
        </Dialog>
    </Page>
);

export default App;
